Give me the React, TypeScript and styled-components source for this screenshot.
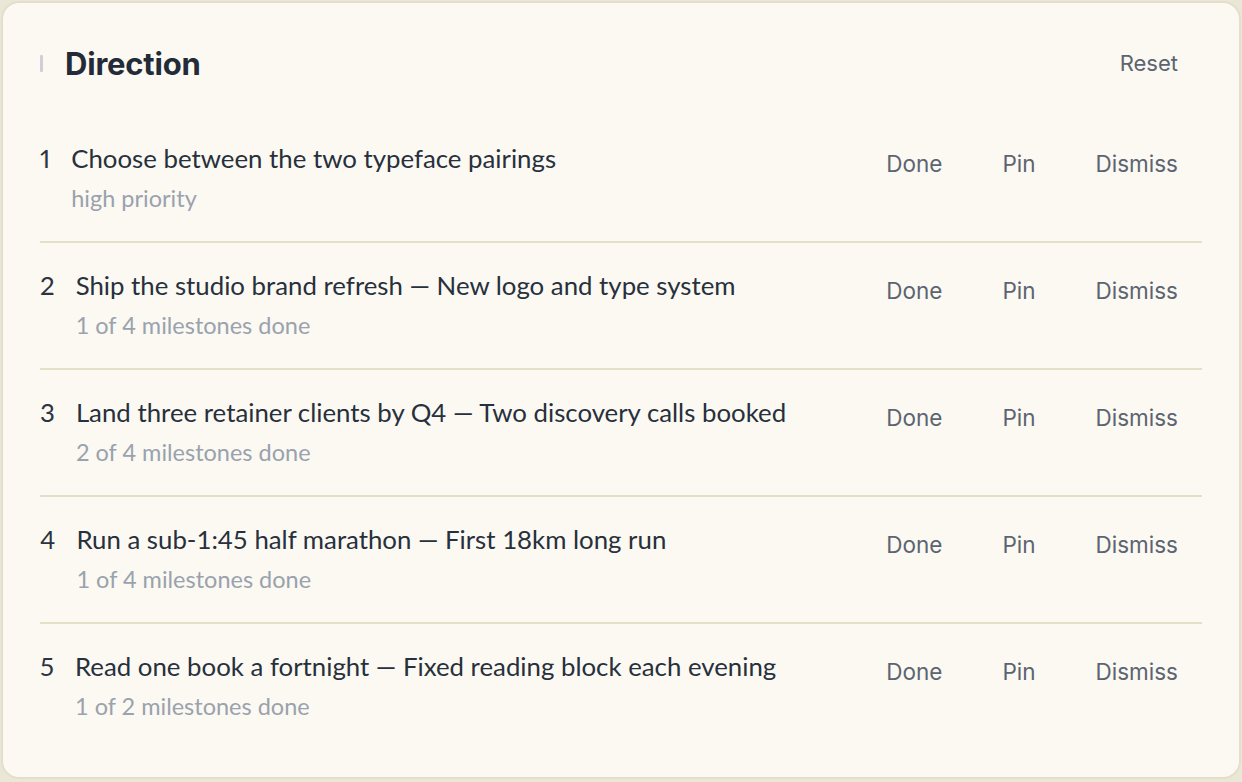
import React from "react";
import styled, { createGlobalStyle } from "styled-components";

const GlobalStyle = createGlobalStyle`
  html, body {
    margin: 0;
    padding: 0;
    background: #ebe7d7;
  }
  #root {
    padding: 1px;
  }
`;

const Card = styled.section`
  box-sizing: border-box;
  width: 1240px;
  background: #fbf9f2;
  border: 2px solid #e4dfcb;
  border-radius: 18px;
  padding: 38px 37px 28px;
  font-family: "Lato", "Inter", sans-serif;
  color: #27303c;
`;

const Header = styled.header`
  display: flex;
  align-items: center;
  justify-content: space-between;
  height: 44px;
  margin-bottom: 31px;
`;

const TitleGroup = styled.div`
  display: flex;
  align-items: center;
  gap: 22px;
`;

const Marker = styled.span`
  display: block;
  width: 3px;
  height: 17px;
  border-radius: 1px;
  background: #cdd0d5;
`;

const Heading = styled.h2`
  margin: 0;
  font-family: "Inter", sans-serif;
  font-weight: 700;
  font-size: 31px;
  letter-spacing: -0.2px;
  color: #222b37;
`;

const TextButton = styled.button<{ $size?: number }>`
  border: none;
  background: none;
  padding: 0;
  cursor: pointer;
  font-family: "Inter", sans-serif;
  font-size: ${(p) => p.$size ?? 22.5}px;
  line-height: 32px;
  color: #5b6471;
`;

const ResetButton = styled(TextButton)`
  margin-right: 24px;
`;

const List = styled.ol`
  list-style: none;
  margin: 0;
  padding: 0;
`;

const Row = styled.li`
  display: flex;
  align-items: flex-start;
  padding: 26px 0 29px;
  border-bottom: 2px solid #e4dfcb;

  &:last-child {
    border-bottom: none;
  }
`;

const Index = styled.span`
  font-size: 25.8px;
  line-height: 32px;
  font-variant-numeric: proportional-nums;
  color: #2b3440;
  margin-right: 21px;
`;

const Body = styled.div`
  flex: 1;
  display: flex;
  flex-direction: column;
  gap: 10px;
`;

const Title = styled.div`
  font-size: 25.8px;
  line-height: 32px;
  color: #27303c;
`;

const Meta = styled.div`
  font-size: 23.5px;
  line-height: 28px;
  color: #9aa2ad;
`;

const Actions = styled.div`
  display: flex;
  gap: 60px;
  padding-top: 6px;
  margin-right: 24px;
`;

type Item = { title: string; meta: string };

const items: Item[] = [
  { title: "Choose between the two typeface pairings", meta: "high priority" },
  { title: "Ship the studio brand refresh — New logo and type system", meta: "1 of 4 milestones done" },
  { title: "Land three retainer clients by Q4 — Two discovery calls booked", meta: "2 of 4 milestones done" },
  { title: "Run a sub-1:45 half marathon — First 18km long run", meta: "1 of 4 milestones done" },
  { title: "Read one book a fortnight — Fixed reading block each evening", meta: "1 of 2 milestones done" },
];

export default function App() {
  return (
    <>
      <GlobalStyle />
      <Card>
        <Header>
          <TitleGroup>
            <Marker />
            <Heading>Direction</Heading>
          </TitleGroup>
          <ResetButton $size={22}>Reset</ResetButton>
        </Header>
        <List>
          {items.map((item, i) => (
            <Row key={item.title}>
              <Index>{i + 1}</Index>
              <Body>
                <Title>{item.title}</Title>
                <Meta>{item.meta}</Meta>
              </Body>
              <Actions>
                <TextButton>Done</TextButton>
                <TextButton>Pin</TextButton>
                <TextButton>Dismiss</TextButton>
              </Actions>
            </Row>
          ))}
        </List>
      </Card>
    </>
  );
}
